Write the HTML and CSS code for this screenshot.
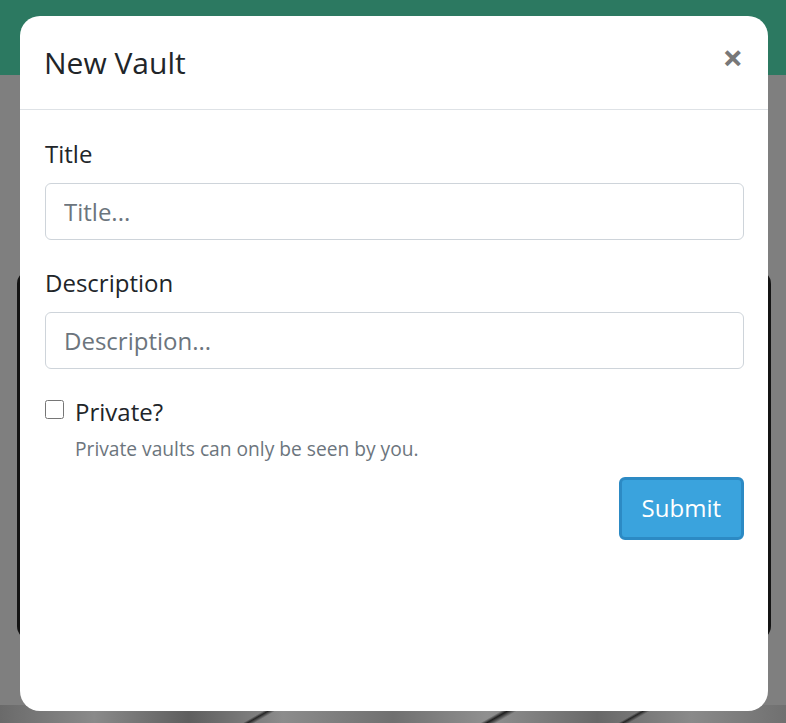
FILE: index.html
```html
<!DOCTYPE html>
<html lang="en">
<head>
<meta charset="utf-8">
<title>New Vault</title>
<link rel="stylesheet" href="styles.css">
</head>
<body>
<div class="page">
  <header class="topbar"></header>
  <main class="content">
    <div class="card-photo"></div>
    <div class="strip-photo"></div>
  </main>
</div>
<div class="backdrop">
  <div class="modal">
    <div class="modal-header">
      <h5 class="modal-title">New Vault</h5>
      <button class="close" type="button" aria-label="Close">&times;</button>
    </div>
    <form class="modal-body">
      <div class="form-group">
        <label class="label" for="title">Title</label>
        <input class="form-control" id="title" type="text" placeholder="Title...">
      </div>
      <div class="form-group">
        <label class="label" for="desc">Description</label>
        <input class="form-control" id="desc" type="text" placeholder="Description...">
      </div>
      <div class="form-check">
        <input class="check" id="priv" type="checkbox">
        <label class="check-label" for="priv">Private?</label>
        <div class="form-text">Private vaults can only be seen by you.</div>
      </div>
      <div class="actions">
        <button class="btn" type="button">Submit</button>
      </div>
    </form>
  </div>
</div>
</body>
</html>
```

FILE: styles.css
```css
html, body {
  margin: 0;
  padding: 0;
}
body {
  background: #7f7f7f;
  font-family: "Open Sans", "Liberation Sans", sans-serif;
  height: 723px;
  overflow: hidden;
}
.page {
  display: flex;
  flex-direction: column;
}
.topbar {
  height: 75px;
  background: #2c7961;
}
.content {
  display: flex;
  flex-direction: column;
  padding: 195px 15px 0 17px;
}
.card-photo {
  height: 370px;
  border-radius: 14px;
  background: #141414;
}
.strip-photo {
  margin: 65px -15px 0 -17px;
  height: 30px;
  background:
    linear-gradient(150deg, transparent 44%, #1e1e1e 48%, transparent 54%) 440px 0 / 110px 30px no-repeat,
    linear-gradient(150deg, transparent 44%, #262626 48%, transparent 54%) 220px 0 / 70px 30px no-repeat,
    linear-gradient(150deg, transparent 44%, #262626 48%, transparent 54%) 600px 0 / 60px 30px no-repeat,
    linear-gradient(90deg, #6a6a6a, #8a8a8a 12%, #5e5e5e 24%, #8c8c8c 36%, #707070 50%, #909090 62%, #686868 76%, #8a8a8a 88%, #707070 100%);
}
.backdrop {
  position: fixed;
  inset: 0;
  display: flex;
  align-items: flex-start;
}
.modal {
  margin: 16px 18px 0 20px;
  width: 748px;
  height: 695px;
  background: #fff;
  border-radius: 20px;
  display: flex;
  flex-direction: column;
  color: #212529;
}
.modal-header {
  display: flex;
  align-items: center;
  justify-content: space-between;
  height: 93px;
  padding: 0 25px 0 24px;
  border-bottom: 1px solid #dee2e6;
  box-sizing: content-box;
}
.modal-title {
  margin: 0;
  font-size: 30px;
  font-weight: 400;
  line-height: 45px;
}
.close {
  border: 0;
  background: none;
  padding: 0;
  font-family: "Open Sans", "Liberation Sans", sans-serif;
  font-size: 36px;
  font-weight: 700;
  line-height: 1;
  color: #787878;
  margin-top: -10px;
}
.modal-body {
  display: flex;
  flex-direction: column;
  padding: 26px 24px 0 25px;
  margin: 0;
}
.form-group {
  display: flex;
  flex-direction: column;
  margin-bottom: 25px;
}
.label {
  font-size: 24px;
  line-height: 36px;
  margin-bottom: 11px;
}
.form-control {
  box-sizing: border-box;
  height: 57px;
  padding: 9px 18px;
  border: 1px solid #ced4da;
  border-radius: 6px;
  font-family: "Open Sans", "Liberation Sans", sans-serif;
  font-size: 24px;
  line-height: 36px;
  color: #495057;
  outline: none;
}
.form-control::placeholder {
  color: #6c757d;
}
.form-check {
  position: relative;
  padding-left: 30px;
}
.check {
  position: absolute;
  left: 0;
  top: 6px;
  margin: 0;
  width: 19px;
  height: 19px;
}
.check-label {
  font-size: 24px;
  line-height: 36px;
  display: block;
}
.form-text {
  margin-top: 5px;
  font-size: 19.2px;
  line-height: 28.8px;
  color: #6c757d;
}
.actions {
  display: flex;
  justify-content: flex-end;
  margin-top: 13px;
}
.btn {
  box-sizing: border-box;
  height: 63px;
  padding: 0 20px;
  border: 3px solid #2c8ac4;
  border-radius: 6px;
  background: #3aa3dd;
  color: #fff;
  font-family: "Open Sans", "Liberation Sans", sans-serif;
  font-size: 24px;
  line-height: 36px;
}
```
